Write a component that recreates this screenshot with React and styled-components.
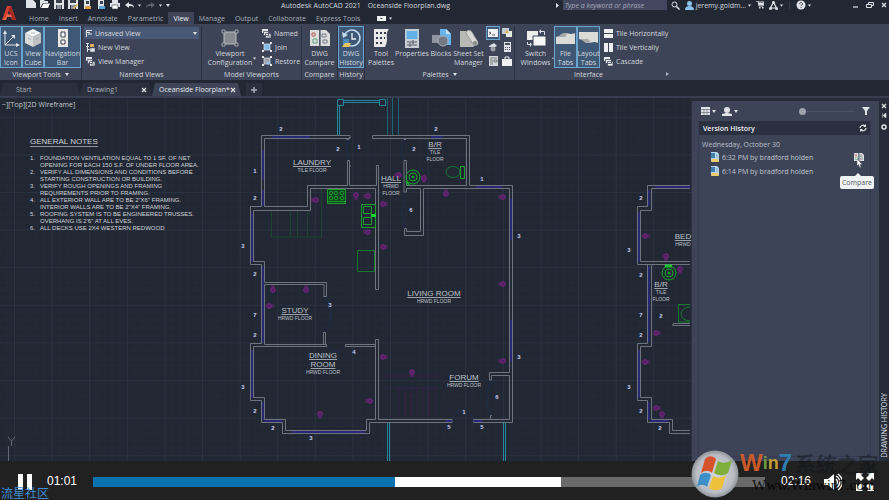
// src/App.jsx

import React from 'react';
import styled, { createGlobalStyle, css } from 'styled-components';

const theme = {
  chrome: '#212733',
  ribbon: '#3d4458',
  line: '#2b3141',
  text: '#d3d7df',
  muted: '#a9afba',
  active: '#3f5876',
  activeBorder: '#6aa5d0',
  icon: '#dfe2e6',
  blue: '#8cc4ee',
  ui: '"Open Sans", "Noto Sans", sans-serif',
  plain: '"Liberation Sans", Arial, sans-serif',
};

const GlobalStyle = createGlobalStyle`
  * {
    box-sizing: border-box;
  }

  body {
    margin: 0;
    background: #212121;
    color: ${theme.text};
    font: 7px/9px ${theme.ui};
  }

  button, input, select {
    margin: 0;
    padding: 0;
    border: 0;
    background: none;
    color: inherit;
    font: inherit;
  }

  svg {
    display: block;
    flex: none;
  }

  a {
    color: inherit;
    text-decoration: none;
  }
`;

const Page = styled.div`
  position: relative;
  display: flex;
  flex-direction: column;
  min-height: 100vh;
  overflow: hidden;
`;

/* ---------- title bar and menu ---------- */

const TopBar = styled.header`
  display: grid;
  grid-template-columns: 24px 1fr;
  height: 24px;
  background: ${theme.chrome};
`;

const LogoButton = styled.button`
  padding: 1px 0 0 1px;
`;

const TopRows = styled.div`
  display: grid;
  grid-template-rows: 12px 12px;
  min-width: 0;
`;

const TitleRow = styled.div`
  display: flex;
  justify-content: space-between;
  height: 10px;
`;

const QuickTools = styled.div`
  display: flex;
  align-items: center;
  gap: 4px;
  width: 252px;
  padding-left: 2px;
`;

const IconButton = styled.button`
  display: flex;
  align-items: center;
  justify-content: center;
  width: ${({ $w }) => $w || 10}px;
  height: ${({ $h }) => $h || 10}px;
`;

const DocTitle = styled.div`
  display: flex;
  flex: 1;
  gap: 7px;
  padding-left: 5px;
  white-space: nowrap;
  line-height: 11px;
`;

const TitleRight = styled.div`
  display: flex;
  align-items: center;
  gap: 4px;
`;

const Divider = styled.span`
  width: 1px;
  height: 8px;
  margin: 0 2px;
  background: #343b4a;
`;

const SearchBox = styled.input`
  width: 104px;
  height: 10px;
  padding: 0 2px;
  background: #42475f;
  font-style: italic;

  &::placeholder {
    color: #a4a8b8;
    opacity: 1;
  }
`;

const WindowButtons = styled.div`
  display: flex;
  gap: 4px;
  margin-left: 36px;
`;

const Menu = styled.nav`
  display: flex;
  align-items: stretch;
`;

const MenuLink = styled.a`
  padding: 1px 5px 0;
  color: ${({ $active }) => ($active ? '#eef1f5' : theme.muted)};
  background: ${({ $active }) => ($active ? theme.ribbon : 'transparent')};
  line-height: 11px;
  white-space: nowrap;
`;

const MenuExtra = styled.button`
  display: flex;
  align-items: center;
  gap: 3px;
  margin-left: 12px;
`;

/* ---------- ribbon ---------- */

const Ribbon = styled.section`
  display: flex;
  height: 56px;
  padding-top: 2px;
  background: ${theme.ribbon};
`;

const Panel = styled.div`
  display: flex;
  flex: none;
  flex-direction: column;
  width: ${({ $w }) => $w}px;
  border-right: ${({ $last }) => ($last ? 0 : `1px solid ${theme.line}`)};
`;

const PanelBody = styled.div`
  display: flex;
  height: 42px;
  padding-left: ${({ $pad }) => $pad || 0}px;
`;

const PanelFooter = styled.div`
  display: flex;
  align-items: center;
  justify-content: center;
  gap: 4px;
  height: 13px;
  white-space: nowrap;
`;

const PanelArrow = styled.span`
  margin-left: auto;
`;

const DropMark = styled.span`
  align-self: flex-end;
  padding-bottom: 8px;
`;

const BigButton = styled.button`
  display: flex;
  flex: none;
  flex-direction: column;
  align-items: center;
  width: ${({ $w }) => $w}px;
  border: 1px solid transparent;
  line-height: 9px;
  white-space: nowrap;
  ${({ $active }) => $active && css`
    background: ${theme.active};
    border-color: ${theme.activeBorder};
  `}
`;

const BigIcon = styled.span`
  display: flex;
  align-items: center;
  height: 22px;
`;

const Stack = styled.div`
  display: grid;
  grid-template-rows: repeat(3, 14px);
  margin-left: ${({ $ml }) => $ml || 0}px;
  width: ${({ $w }) => $w || 'auto'};
`;

const RowButton = styled.button`
  display: flex;
  align-items: center;
  gap: 3px;
  padding-left: ${({ $pad }) => $pad || 0}px;
  white-space: nowrap;
`;

const SelectBox = styled.label`
  display: flex;
  align-items: center;
  gap: 2px;
  height: 12px;
  margin-top: 1px;
  padding: 0 2px;
  background: #485a76;

  select {
    flex: 1;
    appearance: none;
  }

  option {
    color: #111;
  }
`;

const SmallGrid = styled.div`
  display: grid;
  grid-template: repeat(3, 14px) / 14px 14px;
  margin-left: 2px;
`;

const SmallButton = styled(IconButton)`
  width: 14px;
  height: 14px;
  border: 1px solid ${({ $active }) => ($active ? theme.activeBorder : 'transparent')};
  background: ${({ $active }) => ($active ? theme.active : 'transparent')};
`;

/* ---------- file tabs ---------- */

const FileTabs = styled.div`
  display: flex;
  height: 18px;
  padding-top: 3px;
  background: ${theme.chrome};
  border-bottom: 2px solid #373e4f;
`;

const FileTab = styled.div`
  display: flex;
  align-items: center;
  justify-content: space-between;
  width: ${({ $w }) => $w}px;
  padding: 0 5px 0 ${({ $pad }) => $pad || 7}px;
  background: ${({ $active }) => ($active ? theme.ribbon : '#2a303e')};
  color: ${({ $active }) => ($active ? '#e6e9ee' : theme.muted)};
  clip-path: polygon(0 100%, 3px 0, calc(100% - 3px) 0, 100% 100%);
  white-space: nowrap;
`;

const AddTab = styled(IconButton)`
  width: 16px;
  height: 13px;
  margin-left: 5px;
  background: #2a303e;
`;

/* ---------- work area ---------- */

const WorkArea = styled.main`
  display: flex;
  flex: 1;
  min-height: 363px;
  background: #212733;
`;

const Canvas = styled.div`
  position: relative;
  flex: 1;
  min-width: 0;
  overflow: hidden;
`;

const Plan = styled.svg`
  position: absolute;
  inset: 0;
  width: 100%;
  height: 100%;
  font-family: ${theme.plain};
  fill: none;
`;

const ViewLabel = styled.div`
  position: relative;
  padding: 2px 0 0 2px;
  color: #c5c9d0;
`;

const Notes = styled.section`
  position: relative;
  margin: 28px 0 0 30px;
  color: #d0d3d9;
  font-family: ${theme.plain};
  font-size: 6px;
  line-height: 7px;

  h2 {
    display: inline-block;
    margin: 0 0 8px;
    border-bottom: 1px solid #8d929c;
    font-size: 8px;
    font-weight: 400;
    line-height: 9px;
  }

  ol {
    margin: 0;
    padding: 0;
    list-style: none;
    counter-reset: note;
  }

  li {
    display: grid;
    grid-template-columns: 10px 1fr;
    counter-increment: note;
    white-space: pre-line;
  }

  li::before {
    content: counter(note) '.';
  }
`;

/* ---------- history palette ---------- */

const Palette = styled.aside`
  display: grid;
  grid-template-columns: 1fr 10px;
  flex: none;
  width: 197px;
  padding-top: 3px;
  background: #262c39;
`;

const PaletteBody = styled.div`
  display: flex;
  flex-direction: column;
  padding: 3px 8px 4px 6px;
  background: ${theme.ribbon};
`;

const PaletteTools = styled.div`
  display: flex;
  align-items: center;
  gap: 6px;
  height: 14px;
  padding-left: 3px;
`;

const ToolButton = styled.button`
  display: flex;
  align-items: center;
  gap: 2px;
`;

const ZoomRange = styled.input`
  width: 56px;
  height: 8px;
  margin-left: auto;
  appearance: none;
  background: linear-gradient(#4b5268, #4b5268) center / 100% 1px no-repeat;

  &::-webkit-slider-thumb {
    width: 7px;
    height: 7px;
    border-radius: 50%;
    background: #9da2ad;
    appearance: none;
  }
`;

const HistoryBox = styled.div`
  flex: 1;
  margin-top: 3px;
  border: 1px solid #353b55;
  border-top: 0;
`;

const HistoryHead = styled.div`
  display: flex;
  align-items: center;
  justify-content: space-between;
  height: 14px;
  padding: 0 2px 0 4px;
  background: #2a303f;
  color: #f2f3f6;
  font-weight: 600;
`;

const DayLabel = styled.div`
  padding: 5px 0 0 3px;
  color: #b9bec8;
  line-height: 10px;
`;

const HistoryRow = styled.div`
  display: flex;
  align-items: center;
  gap: 3px;
  height: 14px;
  padding: 0 6px 0 11px;
  color: #bfc4ce;
`;

const CompareAnchor = styled.div`
  position: relative;
  margin-left: auto;
`;

const Tooltip = styled.div`
  position: absolute;
  top: 24px;
  right: -10px;
  padding: 2px 2px;
  border-radius: 2px;
  background: #f0f1f3;
  color: #555a66;
  line-height: 9px;

  &::before {
    content: '';
    position: absolute;
    top: -3px;
    right: 13px;
    border: 3px solid transparent;
    border-top: 0;
    border-bottom-color: #f0f1f3;
  }
`;

const Pointer = styled.svg`
  position: absolute;
  top: 7px;
  left: 3px;
`;

const PaletteRail = styled.div`
  display: flex;
  flex-direction: column;
  align-items: center;
  padding-bottom: 3px;
`;

const RailTitle = styled.div`
  margin-top: auto;
  writing-mode: vertical-rl;
  transform: rotate(180deg);
  font-family: Lato, sans-serif;
  line-height: 8px;
  white-space: nowrap;
`;

/* ---------- player ---------- */

const Player = styled.footer`
  display: flex;
  align-items: center;
  height: 39px;
  padding: 2px 15px 0 18px;
  background: #212121;
  color: #fff;
  font-family: ${theme.plain};
  font-size: 12px;
`;

const Time = styled.time`
  padding: ${({ $end }) => ($end ? '0 13px 0 16px' : '0 16px 0 15px')};
`;

const Track = styled.div`
  flex: 1;
  height: 10px;
  background: #6a6a6a;
`;

const Loaded = styled.div`
  height: 10px;
  background: #fff;
`;

const Played = styled.div`
  height: 10px;
  background: #0873ae;
`;

const PlayerButton = styled.button`
  margin-right: ${({ $mr }) => $mr || 0}px;
`;

const Community = styled.div`
  position: absolute;
  left: 1px;
  bottom: 0;
  color: #3f8fd6;
  font: 12px/15px "Noto Sans CJK SC", sans-serif;
`;

const Brand = styled.div`
  position: absolute;
  right: 8px;
  bottom: 0;
  display: flex;
  gap: 1px;
  width: 190px;
  height: 50px;
  pointer-events: none;
`;

const BrandText = styled.div`
  white-space: nowrap;
`;

const BrandName = styled.div`
  display: flex;
  font: 900 24px/26px ${theme.plain};
`;

const BrandPart = styled.b`
  color: ${({ $color }) => $color};
  font-size: ${({ $small }) => ($small ? 18 : 24)}px;
`;

const BrandCjk = styled.b`
  padding-left: 3px;
  color: rgba(16, 18, 22, 0.45);
  font: bold 21px/26px "Noto Sans CJK SC", sans-serif;
`;

const BrandUrl = styled.div`
  padding-left: 12px;
  color: rgba(0, 0, 0, 0.85);
  font: 15px/18px "Liberation Serif", serif;
`;

/* ---------- icons ---------- */

const Svg = ({ w = 10, h = w, vb, children }) => (
  <svg width={w} height={h} viewBox={vb || `0 0 ${w} ${h}`} fill="none" stroke="none" aria-hidden="true">
    {children}
  </svg>
);

const Caret = ({ w = 4 }) => (
  <Svg w={w} h={3} vb="0 0 4 3"><path d="M0 0h4L2 3z" fill={theme.icon} /></Svg>
);

const Cross = () => (
  <Svg w={6}><path d="M1 1l4 4M5 1L1 5" stroke={theme.icon} strokeWidth="1.2" /></Svg>
);

const Logo = () => (
  <Svg w={16}>
    <path d="M1 15L6 1h4l5 14h-4l-1-3H6l-1 3z" fill="#d9402f" />
    <path d="M6.500 9.500h3L8 5z" fill="#212733" />
    <path d="M10 1l5 14h-4L7.500 4z" fill="#a92a22" />
    <path d="M1 15l4-3 1-3 4 1 1 2H6l-1 3z" fill="#ef6a51" />
  </Svg>
);

const NewIcon = () => <Svg><path d="M0 0h7l3 3v5H0z" fill={theme.icon} /></Svg>;
const OpenIcon = () => (
  <Svg><path d="M0 0h4l1 1h3v2H3L0 8z" fill={theme.icon} /><path d="M3.500 3.500H10L8 8H1z" fill="#fff" /></Svg>
);
const SaveIcon = ({ accent }) => (
  <Svg>
    <path d="M0 0h10v9H0z" fill={theme.icon} />
    <path d="M2 0h6v3H2zM2 5h6v4H2z" fill="#39414f" />
    <path d="M3 6h4M3 8h4" stroke={theme.icon} />
    {accent && <path d="M5 8l4-4 1 1-4 4z" fill={accent} />}
  </Svg>
);
const WebIcon = ({ color }) => (
  <Svg><path d="M2 0h6v9H2z" fill={theme.icon} /><path d="M4 1h3v3H4z" fill="#39414f" /><path d="M3 6h6v3H3z" fill={color} /></Svg>
);
const PrintIcon = () => (
  <Svg><path d="M2 0h6v3H2zM0 3h10v4H0z" fill={theme.icon} /><path d="M2 5h6v4H2z" fill="#fff" stroke="#39414f" strokeWidth=".6" /></Svg>
);
const ArrowIcon = ({ flip }) => (
  <Svg w={9} h={8}>
    <g transform={flip ? 'translate(9 0) scale(-1 1)' : undefined}>
      <path d="M0 4l4-3v2c3 0 5 1 5 4C8 5 6 5 4 5v2z" fill={flip ? '#5b6270' : theme.icon} />
    </g>
  </Svg>
);

const AxisIcon = () => (
  <Svg w={18}>
    <path d="M3 3v13h13M3 16L12 7" stroke={theme.icon} />
    <path d="M1 5l2-4 2 4zM14 14l4 2-4 2zM9 6h4v4z" fill={theme.icon} />
  </Svg>
);
const CubeIcon = () => (
  <Svg w={18} h={20}>
    <path d="M9 1l8 4-8 4-8-4z" fill="#f5f5f4" />
    <path d="M1 5l8 4v10l-8-4z" fill="#d9dada" />
    <path d="M17 5L9 9v10l8-4z" fill="#bfc0c1" />
    <path d="M4 10l3 1.500M11 11.500l3-1.500M7 5h4" stroke="#9b9ea3" strokeWidth=".7" />
  </Svg>
);
const NavIcon = () => (
  <Svg w={10} h={18}>
    <path d="M0 0h10v18H0z" fill="#e8e7e2" />
    <path d="M3 3h4v5H3zM3 11h4v4H3z" stroke="#3c4250" fill="#f8f8f8" />
  </Svg>
);
const ViewportIcon = () => (
  <Svg w={18}>
    <path d="M3 3h12v12H3z" fill="#868a92" stroke="#b9bcc2" />
    <path d="M1 1h3v3H1zM14 1h3v3h-3zM1 14h3v3H1zM14 14h3v3h-3z" fill="#3d4458" stroke="#b9bcc2" strokeWidth=".8" />
  </Svg>
);
const ListIcon = ({ accent }) => (
  <Svg w={9}>
    <path d="M0 .5h3M0 3.500h3M1 6.500h3M1.500 0v9" stroke={theme.icon} />
    <path d="M4 1h4v3H4z" fill={accent || theme.icon} />
    <path d="M4 5h5v4H4z" fill={theme.icon} stroke="#4b5060" strokeWidth=".5" />
  </Svg>
);
const ManagerIcon = () => (
  <Svg w={9}>
    <path d="M0 0h6v4H0z" fill={theme.icon} />
    <path d="M1.500 2.500h5v4h-5zM3.500 4.500H9V9H3.500z" fill={theme.icon} stroke="#3d4458" strokeWidth=".7" />
    <path d="M5 7h3" stroke="#5c6271" strokeWidth=".7" />
  </Svg>
);
const ViewIcon = () => (
  <Svg w={7} h={8}><path d="M.5 1v7M1 1.500h5M1 3.500h3" stroke={theme.icon} /><path d="M2 4h4v2H2z" fill="#9ba2b0" /></Svg>
);
const JoinIcon = ({ restore }) => (
  <Svg w={10}>
    <path d="M2 2h6v6H2z" fill={restore ? '#9ba0aa' : '#7eb9e5'} stroke={theme.icon} strokeWidth=".7" />
    <path d="M0 0h2v2H0zM8 0h2v2H8zM0 8h2v2H0zM8 8h2v2H8z" fill={theme.icon} />
    {restore && <path d="M4 5l5 2-3 2z" fill={theme.blue} />}
  </Svg>
);
const CompareIcon = ({ w = 20, h = 18 }) => (
  <Svg w={w} h={h} vb="0 0 20 18">
    <path d="M0 1h9v16H0zM10.500 1H16l4 4v12h-9.500z" fill="#dcdedd" />
    <path d="M2 4h3v3H2z" stroke="#ba5a50" />
    <path d="M3 10h4v4H3z" stroke="#62a27b" />
    <path d="M12 5h4v3h-4zM13 11h4v3h-4z" stroke="#767b85" />
    <path d="M9.750 0v18" stroke="#566071" />
  </Svg>
);
const HistoryIcon = () => (
  <Svg w={20}>
    <path d="M4 6a8 8 0 1 1 0 8" stroke="#c3dcf1" strokeWidth="1.500" />
    <path d="M1 4l1 6 5-3z" fill="#c3dcf1" />
    <path d="M11 5v6h4" stroke="#f0f3f6" strokeWidth="1.300" />
    <path d="M2 11h6v7H2z" fill="#4d8fc2" />
    <path d="M1 19l3-4h6l-2 4z" fill="#eac35b" />
  </Svg>
);
const PaletteIcon = () => (
  <Svg w={16} h={18}>
    <path d="M1 0h15c-3 3-2 7-2 10s-1 6-2 8H1z" fill="#e9eae9" />
    <path d="M3 3h2v2H3zM7 3h2v2H7zM11 3h2v2h-2zM3 8h2v2H3zM7 8h2v2H7zM11 8h1v2h-1zM3 13h2v2H3zM7 13h2v2H7z" fill="#343b4b" />
  </Svg>
);
const PropertiesIcon = () => (
  <Svg w={14} h={19}>
    <path d="M0 0h14v19H0z" fill="#c9ced5" />
    <path d="M1.500 2h11v8h-11z" fill="#61b2e8" />
    <path d="M2 13h10M2 16h10M8 11v4M5 14v4" stroke="#555c69" />
  </Svg>
);
const BlocksIcon = () => (
  <Svg w={20} h={19}>
    <path d="M9 0h6l5 5v11H9z" fill="#65b4ea" />
    <path d="M15 0v5h5z" fill="#c5e3f7" />
    <path d="M1 6h9v8H1z" fill="#8f959f" />
    <circle cx="12" cy="12" r="5" fill="#747a85" stroke="#a6abb4" />
  </Svg>
);
const SheetIcon = () => (
  <Svg w={20} h={19}>
    <path d="M1 2h9l9 12-5 4H1z" fill="#b9b9b6" />
    <path d="M7 4c0-3 4-4 6-1l6 10c1 3-3 5-5 2z" fill="#d8d8d5" stroke="#82848a" strokeWidth=".7" />
    <circle cx="16" cy="14" r="2" fill="#858789" />
  </Svg>
);
const SwitchIcon = () => (
  <Svg w={20} h={19}>
    <path d="M1 2h11v9H1z" fill="#eeeeec" />
    <path d="M7 7h13v10H7z" fill="#f7f7f5" stroke="#3d4458" />
    <path d="M14 2.500h4.500V6M5 15.500H1.500V13" stroke={theme.icon} />
    <path d="M15 0v5l-2-2.500zM4 13v5l2-2.500z" fill={theme.icon} />
  </Svg>
);
const SheetTab = ({ flip }) => (
  <Svg w={19} h={12}>
    <g transform={flip ? 'translate(0 12) scale(1 -1)' : undefined}>
      <path d="M0 5c4 0 5-4 9-4s5 2 10 0v11H0z" fill="#dbdbd7" />
      <path d="M0 5c4 0 5-4 9-4 3 0 2 4-1 4z" fill="#a6a9a8" />
    </g>
  </Svg>
);
const TileIcon = ({ vertical }) => (
  <Svg w={9}><path d={vertical ? 'M0 0h4v9H0zM5 0h4v9H5z' : 'M0 0h9v4H0zM0 5h9v4H0z'} fill="#eceef0" /></Svg>
);
const CascadeIcon = () => (
  <Svg w={9}>
    <path d="M0 0h6v4H0z" fill="#eceef0" />
    <path d="M1.500 2.500h6v4h-6zM3.500 4.500H9V9H3.500z" fill="#eceef0" stroke="#3d4458" strokeWidth=".8" />
  </Svg>
);

const CommandIcon = () => <Svg w={10} h={8}><path d="M0 0h10v8H0z" fill="#f0f1f2" /><path d="M1 3l2 1-2 1.500M4 6h3" stroke="#333a49" strokeWidth=".8" /></Svg>;
const MarkupIcon = () => <Svg><path d="M0 0h7v6H0z" fill="#c6cad1" /><path d="M4 3h6v6H4z" fill="#e7e7e4" /><path d="M3 5l2-3 2 3z" fill="#dba94c" /></Svg>;
const LightIcon = () => <Svg><path d="M1 4l5-3 3 3-2 1H1z" fill="#dfe2e6" /><circle cx="5" cy="7" r="2.500" fill="#9aa0aa" /></Svg>;
const CalcIcon = () => <Svg><path d="M2 0h7v10H2z" fill="#dfe2e6" /><path d="M3 1h5v2H3zM3 5h1v1H3zM5 5h1v1H5zM7 5h1v1H7zM3 7h1v1H3zM5 7h1v1H5zM7 7h1v1H7z" fill="#474e5e" /></Svg>;
const TableIcon = () => <Svg><path d="M1 0h9v10H1z" fill="#d4d7db" /><path d="M2 2h7M2 4h3M2 6h3M2 8h3M6 4h3v2H6z" stroke="#566" strokeWidth=".8" /></Svg>;
const CaseIcon = () => <Svg><path d="M0 3h10v7H0z" fill="#f0f1f2" /><path d="M3 3V1h4v2" stroke="#f0f1f2" /></Svg>;

const FileIcon = () => (
  <Svg w={9} h={10}>
    <path d="M1 0h6l2 2v7H1z" fill="#b9d6ec" />
    <path d="M1 1h4v5H1z" fill="#3f7ead" />
    <path d="M6 3h2M6 5h2" stroke="#5f93b8" strokeWidth=".7" />
    <path d="M1 10l1-3h6l1 3z" fill="#efcb6e" />
  </Svg>
);

const WindowsOrb = () => (
  <Svg w={48} h={48} vb="0 0 48 48">
    <defs>
      <radialGradient id="orb"><stop offset="0" stopColor="#d4d6da" /><stop offset=".8" stopColor="#b9bcc2" /><stop offset="1" stopColor="#8f939a" /></radialGradient>
    </defs>
    <circle cx="24" cy="24" r="23.500" fill="url(#orb)" />
    <path d="M14 9c4-4 8-3 11 0l-4 14c-3-3-7-3-11 0z" fill="#d5522b" />
    <path d="M27 11c5 3 9 2 14-1l-4 13c-4 3-9 3-14 0z" fill="#7fae3b" />
    <path d="M9 25c4-3 8-3 11 0l-4 12c-3-3-7-3-10 0z" fill="#3c8fc9" />
    <path d="M22 26c5 3 9 2 13-1l-4 13c-4 3-8 3-13 0z" fill="#eec13c" />
  </Svg>
);

/* ---------- floor plan ---------- */

const walls = [
  'M350 135.500H261.500V206.500H250.500V264.500H261.500V343.500H250.500V400.500H261.500V422.500H282.500V433.500H369.500V422.500H452V419.500H378.500V339.500H375.500V419.500H366.500V430.500H285.500V419.500H264.500V397.500H253.500V346.500H326.500V344.500H264.500V284.500H324V296.500H326M350 135.500V138.500H264.500V206.500H307.500V185.500H347.500V160.500H349.500V166H351',
  'M253.500 210.500H310.500V188.500H375.500V289.500H378.500V165.500H376.500V185.500H349.500V166M253.500 210.500V261.500H264.500V282.500H326.500V296.500H323.500',
  'M323.500 344V332.500H325.500V344M345.500 344.500H375.500M345.500 346.500H375.500M345.500 344.500V346.500M345 138l3 2 2-3',
  'M372.500 138.500V135.500H469.500V185.500H512.500V422.500H473.500V419.500H509.500V375.500H491.500V380H489.500V372.500H509.500V188.500H423.500V235.500H404.500V228.500H406.500V231.500H420.500V188.500H406.500V192H404V160.500H406.500V185.500H466.500V138.500H372.500',
  'M490.500 419V415.500H492M403 138l2 2 2-2',
  'M690 185.500H647.500V206.500H637.500V264.500H690M690 188.500H651.500V210.500H640.500V261.500H690',
  'M647.500 264.500V343.500H637.500V400.500H647.500V422.500H669.500V433.500H690M651.500 264.500V346.500H640.500V397.500H651.500V419.500H672.500V430.500H690M673 323.500H690M673 325.500H690M673 323.500V326',
];

const windows = [
  'M272 137H310M263 150V180M263 190V206M252 212V262M263 266V343M252 350V398M263 402V420M264 421H282M292 432H365',
  'M431 137H443M476 187H502M511 198V240M511 320V362M446 421H452M473 421H482',
  'M649 190V206M639 212V262M649 266V342M639 350V398M649 402V420M650 421H668M655 187H690',
];

// [x, y, angle]
const outlets = [
  [316, 200, 90], [356, 195, 0], [368, 196, 90], [368, 232, 90], [383, 204, 270], [383, 247, 270],
  [399, 175, 90], [424, 178, 0], [446, 194, 180], [503, 197, 90], [273, 290, 180], [306, 290, 180],
  [269, 306, 270], [383, 357, 270], [370, 401, 90], [320, 414, 0], [412, 372, 0], [503, 284, 90],
  [503, 361, 90], [645, 236, 270], [666, 256, 0], [680, 269, 0], [656, 333, 270], [645, 362, 270],
  [656, 408, 270], [662, 414, 0],
];

const marks = [
  [2, 281, 131], [1, 255, 173], [2, 255, 200], [3, 243, 248], [2, 255, 276], [7, 255, 317], [2, 255, 337],
  [3, 243, 389], [2, 255, 413], [2, 273, 430], [3, 311, 440], [2, 338, 151], [1, 359, 149], [2, 414, 151],
  [2, 436, 131], [1, 482, 181], [6, 411, 212], [3, 519, 238], [3, 519, 359], [6, 497, 399], [1, 464, 414],
  [5, 449, 429], [5, 482, 429], [3, 330, 307], [4, 354, 354], [2, 641, 200], [3, 629, 252], [2, 641, 277],
  [7, 641, 317], [2, 661, 318], [2, 641, 337], [3, 629, 389], [2, 641, 413], [2, 660, 430],
];

// [name lines, floor lines, x, baseline]
const rooms = [
  [['LAUNDRY'], ['TILE FLOOR'], 312, 165],
  [['B/R'], ['TILE', 'FLOOR'], 435, 147],
  [['HALL'], ['HRWD', 'FLOOR'], 391, 181],
  [['STUDY'], ['HRWD FLOOR'], 295, 313],
  [['LIVING ROOM'], ['HRWD FLOOR'], 434, 296],
  [['DINING', 'ROOM'], ['HRWD FLOOR'], 323, 358],
  [['FORUM'], ['HRWD FLOOR'], 464, 380],
  [['BED'], ['HRWD'], 683, 239],
  [['B/R'], ['TILE', 'FLOOR'], 661, 287],
];

const Room = ({ names, floors, x, y }) => {
  const floorY = y + (names.length - 1) * 9 + 7;
  return (
    <g fill="#bfc2c9" textAnchor="middle">
      {names.map((name, i) => (
        <text key={name} x={x} y={y + i * 9} fontSize="8" textDecoration="underline">{name}</text>
      ))}
      {floors.map((floor, i) => (
        <text key={floor} x={x} y={floorY + i * 7} fontSize="5">{floor}</text>
      ))}
    </g>
  );
};

const Basin = ({ x, y }) => (
  <g stroke="#18a82a">
    <circle cx={x} cy={y} r="7" />
    <circle cx={x} cy={y} r="4" />
    <circle cx={x} cy={y} r="1" fill="#18a82a" />
  </g>
);

const FloorPlan = () => (
  <Plan viewBox="0 98 692 363" preserveAspectRatio="xMinYMin slice" role="img" aria-label="Oceanside floorplan">
    <defs>
      <pattern id="grid" x="14" y="4" width="37.600" height="37.600" patternUnits="userSpaceOnUse">
        <path d="M.5 0V37.600M0 .5H37.600" stroke="#2b3445" strokeWidth=".8" />
        <path d="M8 0V37.600M15.500 0V37.600M23 0V37.600M30.500 0V37.600M0 8H37.600M0 15.500H37.600M0 23H37.600M0 30.500H37.600" stroke="#242c39" strokeWidth=".5" />
      </pattern>
    </defs>
    <rect y="98" width="692" height="363" fill="url(#grid)" />

    <path d="M8.500 461V446M8 437l3.500 4 3.500-4M11.500 441V446" stroke="#646b78" />

    <g stroke="#23899a">
      <path d="M337.500 99.500h6v6h-6zM379.500 99.500h6v6h-6z" />
      <path d="M343.500 100.500H379.500M343.500 102.500H379.500M337.500 106V135M339.500 106V135" />
      <path d="M387.500 98V135M392.500 98V135M398.500 98V135" stroke="#1f6476" />
      <path d="M387.500 423V461M389.500 423V461M503.500 423V461M505.500 423V461" />
    </g>

    <g stroke="#1c4a2f" strokeWidth=".8">
      <path d="M271.500 211V237M290.500 211V237M297.500 211V237M307.500 211V237M321.500 189V237M271 237H322" />
    </g>
    <g strokeWidth=".8">
      <path d="M383 376H438M383 388H438M399 388V416M405 388V416M411 388V416M417 388V416M423 388V416M429 388V416M435 388V416" stroke="#39214a" />
      <path d="M349 139Q344 150 350 160M405 139Q398 150 404 160M325 297Q338 312 325 332M327 346Q336 355 345 346M491 381Q482 398 491 415M452 420Q455 410 463 411M473 420Q471 411 463 411M406 194Q398 212 405 228" stroke="#1d3050" />
    </g>

    {walls.map((d) => <path key={d} d={d} stroke="#787c86" strokeWidth=".9" />)}
    {windows.map((d) => <path key={d} d={d} stroke="#292a8c" strokeWidth="1.400" />)}

    <g stroke="#18a02a">
      <path d="M327.500 189.500h18v14h-18z" fill="#10421f" />
      <path d="M327 201.500h19" />
      {[331, 336, 342].map((x) => (
        <g key={x}><circle cx={x} cy="193" r="1.800" /><circle cx={x} cy="198" r="1.800" /></g>
      ))}
      <path d="M361.500 204.500h14v23h-14zM363.500 206.500h8v7h-8zM363.500 217.500h8v7h-8z" />
      <path d="M371 215.500h5" strokeWidth="3" stroke="#1ad62f" />
      <path d="M357.500 250.500h17v21h-17z" stroke="#157a2a" />
      <path d="M460.500 166.500h4v12h-4z" />
      <ellipse cx="453" cy="172" rx="7" ry="5.500" stroke="#157a2a" />
      <path d="M690 304.500H678.500V322H690M690 307Q681 308 681 314T690 321" stroke="#157a2a" />
      <path d="M665 266h7" strokeWidth="3" stroke="#1ad62f" />
      <path d="M406 181l3 4" strokeWidth="2" />
    </g>
    <Basin x={413} y={177} />
    <Basin x={669} y={273} />

    {outlets.map(([x, y, angle]) => (
      <g key={`${x}-${y}`} transform={`translate(${x} ${y}) rotate(${angle})`} stroke="#7b2488">
        <circle r="2.300" fill="#53205f" />
        <path d="M-1 2V5M1 2V5" strokeWidth=".8" />
      </g>
    ))}

    {rooms.map(([names, floors, x, y]) => (
      <Room key={`${names[0]}-${x}`} names={names} floors={floors} x={x} y={y} />
    ))}
    <g fill="#c9cbf0" fontSize="6" fontWeight="bold" textAnchor="middle">
      {marks.map(([n, x, y]) => <text key={`${x}-${y}`} x={x} y={y}>{n}</text>)}
    </g>
  </Plan>
);

/* ---------- page parts ---------- */

const menuItems = ['Home', 'Insert', 'Annotate', 'Parametric', 'View', 'Manage', 'Output', 'Collaborate', 'Express Tools'];

const notes = [
  'FOUNDATION VENTILATION EQUAL TO 1 SF. OF NET\nOPENING FOR EACH 150 S.F. OF UNDER FLOOR AREA.',
  'VERIFY ALL DIMENSIONS AND CONDITIONS BEFORE\nSTARTING CONSTRUCTION OR BUILDING.',
  'VERIFY ROUGH OPENINGS AND FRAMING\nREQUIREMENTS PRIOR TO FRAMING.',
  'ALL EXTERIOR WALL ARE TO BE 2"X6" FRAMING.\nINTERIOR WALLS ARE TO BE 2"X4" FRAMING.',
  'ROOFING SYSTEM IS TO BE ENGINEERED TRUSSES.\nOVERHANG IS 2\'6" AT ALL EVES.',
  'ALL DECKS USE 2X4 WESTERN REDWOOD',
];

const Big = ({ icon, lines, w, active }) => (
  <BigButton $w={w} $active={active}>
    <BigIcon>{icon}</BigIcon>
    {lines.map((line) => <span key={line}>{line}</span>)}
  </BigButton>
);

const Header = () => (
  <TopBar>
    <LogoButton aria-label="Application menu"><Logo /></LogoButton>
    <TopRows>
      <TitleRow>
        <QuickTools>
          <IconButton aria-label="New"><NewIcon /></IconButton>
          <IconButton aria-label="Open"><OpenIcon /></IconButton>
          <IconButton aria-label="Save"><SaveIcon /></IconButton>
          <IconButton aria-label="Save as"><SaveIcon accent="#e9b65a" /></IconButton>
          <IconButton aria-label="Open from web"><WebIcon color="#d9a04c" /></IconButton>
          <IconButton aria-label="Save to web"><WebIcon color="#5aa4da" /></IconButton>
          <IconButton aria-label="Plot"><PrintIcon /></IconButton>
          <IconButton aria-label="Undo"><ArrowIcon /></IconButton>
          <Caret w={3} />
          <IconButton aria-label="Redo"><ArrowIcon flip /></IconButton>
          <Caret w={3} />
          <Caret />
        </QuickTools>
        <DocTitle><span>Autodesk AutoCAD 2021</span><span>Oceanside Floorplan.dwg</span></DocTitle>
        <TitleRight>
          <Svg w={3} h={5}><path d="M0 0l3 2.500L0 5z" fill={theme.icon} /></Svg>
          <SearchBox type="search" aria-label="Search" placeholder="Type a keyword or phrase" />
          <IconButton aria-label="Find">
            <Svg w={9}><circle cx="3.500" cy="3.500" r="2.500" stroke={theme.icon} /><path d="M5.500 5.500l3 3" stroke={theme.icon} strokeWidth="1.500" /></Svg>
          </IconButton>
          <ToolButton>
            <Svg w={9}><circle cx="4.500" cy="2.500" r="2.500" fill={theme.blue} /><path d="M0 9c0-3 2-4 4.500-4S9 6 9 9z" fill={theme.blue} /></Svg>
            <span>jeremy.goldm...</span>
            <Caret w={3} />
          </ToolButton>
          <IconButton aria-label="App store">
            <Svg w={8}><path d="M0 0h2l1 5h4l1-4H2.500" stroke={theme.icon} /><path d="M3 6h1.500v1.500H3zM6 6h1.500v1.500H6zM3 2h4v2H3z" fill={theme.icon} /></Svg>
          </IconButton>
          <ToolButton aria-label="Connect">
            <Svg w={9}><path d="M4.500 1L1.500 7h6z" stroke={theme.icon} strokeWidth="1.200" /><circle cx="4.500" cy="1.500" r="1.500" fill={theme.icon} /><circle cx="1.500" cy="7.500" r="1.500" fill={theme.icon} /><circle cx="7.500" cy="7.500" r="1.500" fill={theme.icon} /></Svg>
            <Caret w={3} />
          </ToolButton>
          <Divider />
          <ToolButton aria-label="Help">
            <Svg w={10}><circle cx="5" cy="5" r="4.500" fill={theme.icon} /><path d="M3.500 4c0-2 3-2 3 0 0 1-1.500 1-1.500 2M5 7v1" stroke="#39414f" /></Svg>
            <Caret w={3} />
          </ToolButton>
          <WindowButtons>
            <IconButton aria-label="Minimize"><Svg w={6}><path d="M0 5h5" stroke={theme.icon} strokeWidth="1.200" /></Svg></IconButton>
            <IconButton aria-label="Restore"><Svg w={8}><path d="M2.500 3V1.500h5v3H6M.5 3.500h5v3h-5z" stroke={theme.icon} /></Svg></IconButton>
            <IconButton aria-label="Close"><Cross /></IconButton>
          </WindowButtons>
        </TitleRight>
      </TitleRow>
      <Menu>
        {menuItems.map((item) => (
          <MenuLink key={item} href={`#${item}`} $active={item === 'View'}>{item}</MenuLink>
        ))}
        <MenuExtra aria-label="Ribbon options">
          <Svg w={9} h={5}><path d="M0 0h9v5H0z" fill="#f0f1f3" /><path d="M3 3l1.500-1.500L6 3z" fill="#444" /></Svg>
          <Caret w={3} />
        </MenuExtra>
      </Menu>
    </TopRows>
  </TopBar>
);

const Tools = () => (
  <Ribbon>
    <Panel $w={82}>
      <PanelBody>
        <Big icon={<AxisIcon />} lines={['UCS', 'Icon']} w={22} active />
        <Big icon={<CubeIcon />} lines={['View', 'Cube']} w={22} active />
        <Big icon={<NavIcon />} lines={['Navigation', 'Bar']} w={37} active />
      </PanelBody>
      <PanelFooter>Viewport Tools <Caret /></PanelFooter>
    </Panel>
    <Panel $w={120}>
      <PanelBody $pad={2}>
        <Stack $w="115px">
          <SelectBox>
            <ViewIcon />
            <select aria-label="Saved view" defaultValue="Unsaved View"><option>Unsaved View</option></select>
            <Caret />
          </SelectBox>
          <RowButton $pad={2}><ListIcon accent="#e0aa62" />New View</RowButton>
          <RowButton $pad={2}><ManagerIcon />View Manager</RowButton>
        </Stack>
      </PanelBody>
      <PanelFooter>Named Views</PanelFooter>
    </Panel>
    <Panel $w={100}>
      <PanelBody $pad={5}>
        <Big icon={<ViewportIcon />} lines={['Viewport', 'Configuration']} w={46} />
        <DropMark><Caret w={3} /></DropMark>
        <Stack $ml={6}>
          <RowButton><ManagerIcon />Named</RowButton>
          <RowButton><JoinIcon />Join</RowButton>
          <RowButton><JoinIcon restore />Restore</RowButton>
        </Stack>
      </PanelBody>
      <PanelFooter>Model Viewports</PanelFooter>
    </Panel>
    <Panel $w={36}>
      <PanelBody><Big icon={<CompareIcon />} lines={['DWG', 'Compare']} w={35} /></PanelBody>
      <PanelFooter>Compare</PanelFooter>
    </Panel>
    <Panel $w={27}>
      <PanelBody><Big icon={<HistoryIcon />} lines={['DWG', 'History']} w={26} active /></PanelBody>
      <PanelFooter>History</PanelFooter>
    </Panel>
    <Panel $w={150}>
      <PanelBody $pad={2}>
        <Big icon={<PaletteIcon />} lines={['Tool', 'Palettes']} w={28} />
        <Big icon={<PropertiesIcon />} lines={['Properties']} w={34} />
        <Big icon={<BlocksIcon />} lines={['Blocks']} w={24} />
        <Big icon={<SheetIcon />} lines={['Sheet Set', 'Manager']} w={31} />
        <SmallGrid>
          <SmallButton aria-label="Command line" $active><CommandIcon /></SmallButton>
          <SmallButton aria-label="Markup"><MarkupIcon /></SmallButton>
          <SmallButton aria-label="Lights"><LightIcon /></SmallButton>
          <SmallButton aria-label="Calculator"><CalcIcon /></SmallButton>
          <SmallButton aria-label="Table"><TableIcon /></SmallButton>
          <SmallButton aria-label="Toolbox"><CaseIcon /></SmallButton>
        </SmallGrid>
      </PanelBody>
      <PanelFooter>Palettes <Caret /></PanelFooter>
    </Panel>
    <Panel $w={154} $last>
      <PanelBody $pad={4}>
        <Big icon={<SwitchIcon />} lines={['Switch', 'Windows']} w={33} />
        <DropMark><Caret w={2} /></DropMark>
        <Big icon={<SheetTab />} lines={['File', 'Tabs']} w={23} active />
        <Big icon={<SheetTab flip />} lines={['Layout', 'Tabs']} w={23} active />
        <Stack $ml={4}>
          <RowButton><TileIcon />Tile Horizontally</RowButton>
          <RowButton><TileIcon vertical />Tile Vertically</RowButton>
          <RowButton><CascadeIcon />Cascade</RowButton>
        </Stack>
      </PanelBody>
      <PanelFooter>
        <PanelArrow>Interface</PanelArrow>
        <PanelArrow><Svg w={3} h={4}><path d="M0 0l3 2-3 2z" fill={theme.muted} /></Svg></PanelArrow>
      </PanelFooter>
    </Panel>
  </Ribbon>
);

const Tabs = () => (
  <FileTabs>
    <FileTab $w={80} $pad={16}>Start</FileTab>
    <FileTab $w={72}>Drawing1 <IconButton $w={6} aria-label="Close Drawing1"><Cross /></IconButton></FileTab>
    <FileTab $w={89} $active>Oceanside Floorplan* <IconButton $w={6} aria-label="Close Oceanside Floorplan"><Cross /></IconButton></FileTab>
    <AddTab aria-label="New tab"><Svg w={6}><path d="M3 0v6M0 3h6" stroke={theme.muted} strokeWidth="1.500" /></Svg></AddTab>
  </FileTabs>
);

const HistoryPalette = () => (
  <Palette>
    <PaletteBody>
      <PaletteTools>
        <ToolButton aria-label="Date filter">
          <Svg w={9} h={8}><path d="M0 0h9v8H0z" fill={theme.icon} /><path d="M0 2.500h9M0 5.500h9M3 2v6M6 2v6" stroke="#5c6271" strokeWidth=".6" /></Svg>
          <Caret />
        </ToolButton>
        <ToolButton aria-label="User filter">
          <Svg w={10} h={9}><circle cx="5" cy="3" r="3" fill={theme.icon} /><path d="M0 9V7l4-1h2l4 1v2z" fill={theme.icon} /></Svg>
          <Caret />
        </ToolButton>
        <ZoomRange type="range" aria-label="Timeline" defaultValue="0" />
        <IconButton aria-label="Filter"><Svg w={8} h={8}><path d="M0 0h8L5 4v4H3V4z" fill={theme.icon} /></Svg></IconButton>
      </PaletteTools>
      <HistoryBox>
        <HistoryHead>
          Version History
          <IconButton aria-label="Refresh">
            <Svg w={8}><path d="M1 4a3 3 0 0 1 5-2M7 4a3 3 0 0 1-5 2" stroke={theme.icon} strokeWidth="1.200" /><path d="M7 0v3H4zM1 8V5h3z" fill={theme.icon} /></Svg>
          </IconButton>
        </HistoryHead>
        <DayLabel>Wednesday, October 30</DayLabel>
        <HistoryRow>
          <FileIcon />6:32 PM by bradford holden
          <CompareAnchor>
            <IconButton aria-label="Compare"><CompareIcon w={10} h={10} /></IconButton>
            <Pointer width="6" height="9" viewBox="0 0 6 9" aria-hidden="true"><path d="M0 0v7l1.500-1.500L3 9l1-1-1-2.500h2.500z" fill="#fff" stroke="#333" strokeWidth=".4" /></Pointer>
            <Tooltip role="tooltip">Compare</Tooltip>
          </CompareAnchor>
        </HistoryRow>
        <HistoryRow><FileIcon />6:14 PM by bradford holden</HistoryRow>
      </HistoryBox>
    </PaletteBody>
    <PaletteRail>
      <IconButton $h={9} aria-label="Close palette"><Cross /></IconButton>
      <IconButton $h={11} aria-label="Auto-hide"><Svg w={5}><path d="M.5 0v5M1 2.500L4 0v5z" fill={theme.icon} stroke={theme.icon} strokeWidth=".5" /></Svg></IconButton>
      <IconButton $h={11} aria-label="Palette settings"><Svg w={6}><circle cx="3" cy="3" r="2" stroke={theme.icon} strokeWidth="1.500" /></Svg></IconButton>
      <RailTitle>DRAWING HISTORY</RailTitle>
    </PaletteRail>
  </Palette>
);

const PlayerBar = ({ played, loaded }) => (
  <Player>
    <PlayerButton aria-label="Pause"><Svg w={14} h={16}><path d="M0 0h5v16H0zM9 0h5v16H9z" fill="#fff" /></Svg></PlayerButton>
    <Time>01:01</Time>
    <Track>
      <Loaded style={{ width: `${loaded}%` }}><Played style={{ width: `${(played / loaded) * 100}%` }} /></Loaded>
    </Track>
    <Time $end>02:16</Time>
    <PlayerButton aria-label="Volume" $mr={14}>
      <Svg w={18} h={18}>
        <path d="M0 6h4l6-5v16l-6-5H0z" fill="#fff" />
        <path d="M12 6c2 2 2 4 0 6M12 3c5 3 5 9 0 12M14 1c6 5 6 11 0 16" stroke="#fff" strokeWidth="1.400" />
      </Svg>
    </PlayerButton>
    <PlayerButton aria-label="Full screen">
      <Svg w={18}><path d="M0 0h7L5 2l3 3-3 3-3-3-2 2zM18 0v7l-2-2-3 3-3-3 3-3-2-2zM0 18v-7l2 2 3-3 3 3-3 3 2 2zM18 18h-7l2-2-3-3 3-3 3 3 2-2z" fill="#fff" /></Svg>
    </PlayerButton>
  </Player>
);

const App = () => (
  <>
    <GlobalStyle />
    <Page>
      <Header />
      <Tools />
      <Tabs />
      <WorkArea>
        <Canvas>
          <FloorPlan />
          <ViewLabel>−][Top][2D Wireframe]</ViewLabel>
          <Notes>
            <h2>GENERAL NOTES</h2>
            <ol>{notes.map((note) => <li key={note}>{note}</li>)}</ol>
          </Notes>
        </Canvas>
        <HistoryPalette />
      </WorkArea>
      <PlayerBar played={45} loaded={69.7} />
      <Community>流星社区</Community>
      <Brand>
        <WindowsOrb />
        <BrandText>
          <BrandName>
            <BrandPart $color="#c95a2a">W</BrandPart>
            <BrandPart $color="#6f9a3e" $small>i</BrandPart>
            <BrandPart $color="#c39a32" $small>n</BrandPart>
            <BrandPart $color="#2d7fb0">7</BrandPart>
            <BrandCjk>系统之家</BrandCjk>
          </BrandName>
          <BrandUrl>Www.Winwin7.com</BrandUrl>
        </BrandText>
      </Brand>
    </Page>
  </>
);

export default App;
